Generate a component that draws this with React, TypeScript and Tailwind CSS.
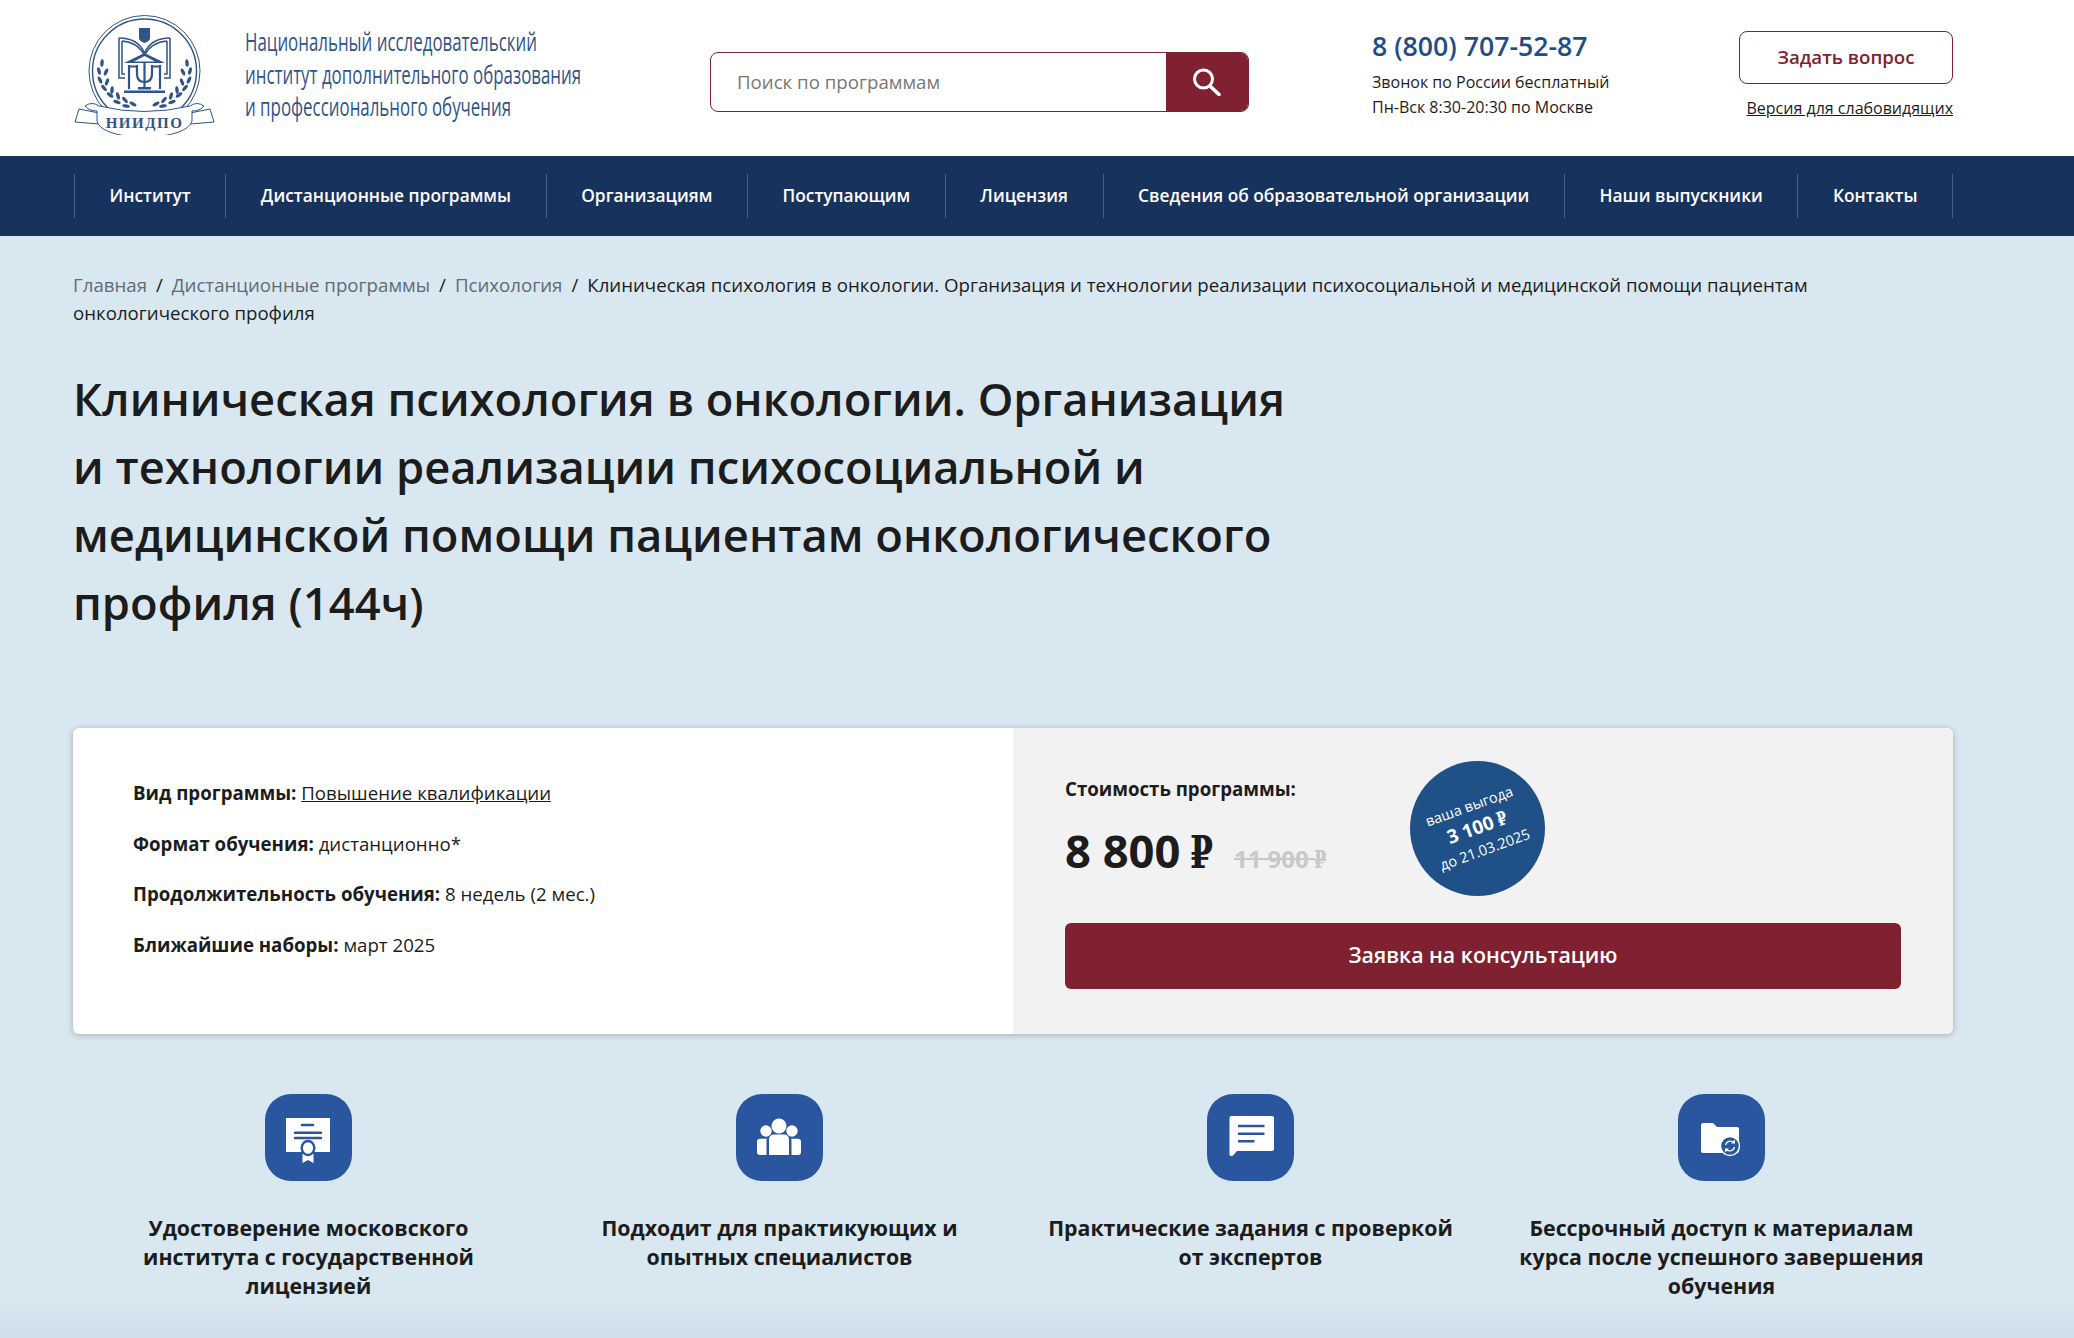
const navItems = [
  "Институт",
  "Дистанционные программы",
  "Организациям",
  "Поступающим",
  "Лицензия",
  "Сведения об образовательной организации",
  "Наши выпускники",
  "Контакты",
];

function Rub({ struck }: { struck?: boolean }) {
  return (
    <span className={`-ml-[0.04em] -mr-[0.2em] inline-block origin-left scale-x-[0.73] font-['DejaVu_Serif',serif] ${struck ? "line-through" : ""}`}>
      ₽
    </span>
  );
}

function Laurel({ flip }: { flip?: boolean }) {
  const leaves = [
    [29, 48, 5],
    [26, 56, -15],
    [33, 57, 25],
    [27, 65, -25],
    [34, 67, 20],
    [31, 73, -40],
    [39, 75, 5],
    [37, 80, -55],
    [45, 81, -15],
    [44, 87, -70],
    [52, 85, -40],
    [53, 91, -80],
    [60, 89, -60],
  ];
  return (
    <g transform={flip ? "translate(143 0) scale(-1 1)" : undefined} fill="#2f5488">
      {leaves.map(([x, y, r], i) => (
        <ellipse key={i} cx={x} cy={y} rx="1.700" ry="3.800" transform={`rotate(${r} ${x} ${y})`} />
      ))}
    </g>
  );
}

function Logo() {
  return (
    <svg width="142" height="120" viewBox="0 0 142 120" className="shrink-0" aria-hidden="true">
      <circle cx="71.500" cy="56" r="55.500" fill="none" stroke="#2f5488" strokeWidth="1" />
      <circle cx="71.500" cy="56" r="52" fill="none" stroke="#2f5488" strokeWidth="1.400" />
      <path d="M66 13h11v10q0 3-5.500 5-5.500-2-5.500-5z" fill="#2f5488" />
      <g fill="none" stroke="#2f5488" strokeWidth="1.500">
        <path d="M46 23v40h6M49 26v33h3" />
        <path d="M97 23v40h-6M94 26v33h-3" />
        <path d="M46 23q19 0 25.500 15M97 23q-19 0-25.500 15" />
        <path d="M49 26q15 1 22.500 14M94 26q-15 1-22.500 14" />
      </g>
      <path d="M71.500 38 92 48H51z" fill="#2f5488" />
      <path d="M71.500 41 82 46.500H61z" fill="#fff" />
      <g fill="none" stroke="#2f5488" strokeWidth="2.200">
        <path d="M56 50v24M87 50v24" />
        <path d="M56 51.500h8M87 51.500h-8" />
        <path d="M64 50v9q0 8 7.500 8t7.500-8v-9" />
        <path d="M71.500 48v26" />
      </g>
      <path d="M65 72h13v2.500H65z" fill="#2f5488" />
      <path d="M51 75.500h41v2.500H51z" fill="#2f5488" />
      <Laurel />
      <Laurel flip />
      <g fill="#fff" stroke="#2f5488" strokeWidth="1">
        <path d="M2 107l4-13 20 4v11z" />
        <path d="M141 107l-4-13-20 4v11z" />
        <path d="M12 91q7-5 14 0 45 11 91 0 7-5 14 0-4 5-12 5v10q-4 14-48 17-44-3-47-17V96q-8 0-12-5z" />
      </g>
      <text x="71.500" y="112.500" textAnchor="middle" fontSize="15" fontWeight="700" letterSpacing="1.500" fontFamily="'Liberation Serif', serif" fill="#2f5488">
        НИИДПО
      </text>
    </svg>
  );
}

function SearchIcon() {
  return (
    <svg width="30" height="28" viewBox="0 0 30 28" fill="none" aria-hidden="true">
      <circle cx="11.500" cy="11" r="9" stroke="#fff" strokeWidth="3" />
      <path d="M18 18l9 8.500" stroke="#fff" strokeWidth="3.600" strokeLinecap="round" />
    </svg>
  );
}

function IconBox({ children }: { children: React.ReactNode }) {
  return (
    <div className="flex h-[87px] w-[87px] items-center justify-center rounded-[26px] bg-[#2a56a0]">
      <svg width="87" height="87" viewBox="0 0 87 87" aria-hidden="true">
        {children}
      </svg>
    </div>
  );
}

const features = [
  {
    lines: ["Удостоверение московского", "института с государственной", "лицензией"],
    icon: (
      <>
        <path d="M21 24h44v34H21z" fill="#fff" />
        <path d="M37 31h11M30 38.700h26M30 44h26" stroke="#2a56a0" strokeWidth="2.600" strokeLinecap="round" />
        <path d="M37.500 60h11v9l-5.500-3-5.500 3z" fill="#fff" />
        <ellipse cx="43" cy="54" rx="6.300" ry="7" fill="#fff" stroke="#2a56a0" strokeWidth="2.400" />
      </>
    ),
  },
  {
    lines: ["Подходит для практикующих и", "опытных специалистов"],
    icon: (
      <g fill="#fff">
        <ellipse cx="43" cy="32" rx="7.500" ry="7.500" />
        <circle cx="30" cy="37" r="5.700" />
        <circle cx="56" cy="37" r="5.700" />
        <path d="M33 46q0-5.500 5-5.500h10q5 0 5 5.500v15H33z" />
        <path d="M31 44.700q-.5 1-.5 2.300v14H24q-3 0-3-3V48q0-3.300 3-3.300z" />
        <path d="M55 44.700q.5 1 .5 2.300v14H62q3 0 3-3V48q0-3.300-3-3.300z" />
      </g>
    ),
  },
  {
    lines: ["Практические задания с проверкой", "от экспертов"],
    icon: (
      <>
        <path d="M24.500 22H65q2 0 2 2v31q0 2-2 2H30l-4 4.500q-2.500 1.500-3.500-.5V24q0-2 2-2z" fill="#fff" />
        <path d="M31 32h26.500M31 39.700h26.500M31 47.300h16.500" stroke="#2a56a0" strokeWidth="2.400" />
      </>
    ),
  },
  {
    lines: ["Бессрочный доступ к материалам", "курса после успешного завершения", "обучения"],
    icon: (
      <>
        <path d="M25 29h10l4 4h20q2 0 2 2v22q0 2-2 2H25q-2 0-2-2V31q0-2 2-2z" fill="#fff" />
        <circle cx="52" cy="52" r="9.500" fill="#2a56a0" stroke="#fff" strokeWidth="1.400" />
        <path d="M47.500 51a4.800 4.800 0 0 1 8-2.500M56.500 53a4.800 4.800 0 0 1-8 2.500" fill="none" stroke="#fff" strokeWidth="1.300" />
        <path d="M57 45.500v4h-4zM47 58.500v-4h4z" fill="#fff" />
      </>
    ),
  },
];

export default function App() {
  return (
    <div className="relative h-[1338px] overflow-hidden bg-[#d9e7f1] font-['Open_Sans',sans-serif] text-[#1c1c1c]">
      {/* шапка */}
      <header className="flex h-[156px] bg-white pl-[73px] pr-[121px]">
        <div className="flex w-[637px] items-center gap-[30px] pb-[6px]">
          <Logo />
          <div className="-mt-[2px] origin-left scale-x-[0.675] whitespace-nowrap text-[25px] leading-[32.500px] text-[#2f5488]">
            Национальный исследовательский
            <br />
            институт дополнительного образования
            <br />
            и профессионального обучения
          </div>
        </div>
        <div className="mt-[52px] flex h-[60px] w-[539px] overflow-hidden rounded-lg border border-[#7f2130]">
          <div className="flex flex-1 items-center pl-[26px] text-[18.670px] text-[#777]">Поиск по программам</div>
          <div className="flex w-[82px] items-center justify-center bg-[#7f2130]">
            <SearchIcon />
          </div>
        </div>
        <div className="ml-[123px] flex w-[367px] flex-col pt-[28px]">
          <div className="text-[26.670px] font-semibold leading-[36px] text-[#1f4e87]">8 (800) 707-52-87</div>
          <div className="mt-[6px] text-[16px] leading-[25px]">
            Звонок по России бесплатный
            <br />
            Пн-Вск 8:30-20:30 по Москве
          </div>
        </div>
        <div className="flex w-[214px] flex-col items-end pt-[31px]">
          <div className="flex h-[53px] w-[214px] items-center justify-center rounded-lg border border-[#7f2130] pb-[2px] text-[18.670px] font-semibold text-[#7f2130]">
            Задать вопрос
          </div>
          <a className="mt-[12px] text-[16px] leading-[24px] underline">Версия для слабовидящих</a>
        </div>
      </header>

      {/* меню */}
      <nav className="flex h-[80px] bg-[#17325c] pl-[74px] pr-[121px]">
        <div className="flex h-[44px] flex-1 items-center justify-between self-center whitespace-nowrap border-r border-[#4a6288]">
          {navItems.map((item) => (
            <div key={item} className="flex h-[44px] items-center border-l border-[#4a6288] px-[34.500px] text-[17.330px] font-semibold text-white">
              {item}
            </div>
          ))}
        </div>
      </nav>

      <main className="pl-[73px] pr-[121px]">
        <div className="max-w-[1760px] pt-[35px] text-[18.670px] leading-[28px]">
          <span className="text-[#5f6b75]">Главная</span>
          <span className="mx-[9px]">/</span>
          <span className="text-[#5f6b75]">Дистанционные программы</span>
          <span className="mx-[9px]">/</span>
          <span className="text-[#5f6b75]">Психология</span>
          <span className="mx-[9px]">/</span>
          Клиническая психология в онкологии. Организация и технологии реализации психосоциальной и медицинской помощи пациентам онкологического профиля
        </div>

        <h1 className="mt-[38px] max-w-[1250px] text-[45.330px] font-semibold leading-[68px]">
          Клиническая психология в онкологии. Организация и технологии реализации психосоциальной и медицинской помощи пациентам онкологического профиля (144ч)
        </h1>

        {/* карточка программы */}
        <section className="mt-[91px] flex h-[306px] overflow-hidden rounded-md bg-white shadow-[0_1px_6px_rgba(0,0,0,0.25)]">
          <div className="flex w-[940px] flex-col gap-[22.700px] pl-[60px] pt-[51px] text-[18.670px] leading-[28px]">
            <div>
              <b className="font-bold">Вид программы:</b> <span className="underline">Повышение квалификации</span>
            </div>
            <div>
              <b className="font-bold">Формат обучения:</b> дистанционно*
            </div>
            <div>
              <b className="font-bold">Продолжительность обучения:</b> 8 недель (2 мес.)
            </div>
            <div>
              <b className="font-bold">Ближайшие наборы:</b> март 2025
            </div>
          </div>
          <div className="flex flex-1 flex-col bg-[#f2f2f2] px-[52px]">
            <div className="flex h-[195px]">
              <div className="w-[345px] pt-[48px]">
                <div className="text-[18.670px] font-bold leading-[26px]">Стоимость программы:</div>
                <div className="mt-[19px] flex items-baseline whitespace-nowrap">
                  <span className="text-[45.330px] font-bold leading-[60px]">
                    8 800 <Rub />
                  </span>
                  <span className="ml-[21px] text-[24px] font-bold text-[#c8c8c8] line-through">
                    11 900 <Rub struck />
                  </span>
                </div>
              </div>
              <div className="mt-[33px] flex h-[135px] w-[135px] items-center justify-center rounded-full bg-[#205088] text-white">
                <div className="-rotate-[20deg] text-center">
                  <div className="text-[14.500px] leading-[20px]">ваша выгода</div>
                  <div className="text-[19px] font-bold leading-[24px]">
                    3 100 <Rub />
                  </div>
                  <div className="text-[14.500px] leading-[24px]">до 21.03.2025</div>
                </div>
              </div>
            </div>
            <div className="flex h-[66px] items-center justify-center rounded-md bg-[#7f2130] pb-[3px] text-[21.330px] font-semibold text-white">
              Заявка на консультацию
            </div>
          </div>
        </section>

        {/* преимущества */}
        <section className="mt-[60px] grid w-[1884px] grid-cols-4">
          {features.map((f) => (
            <div key={f.lines[0]} className="flex flex-col items-center text-center">
              <IconBox>{f.icon}</IconBox>
              <div className="mt-[32px] whitespace-nowrap text-[21.330px] font-bold leading-[29px]">
                {f.lines.map((line) => (
                  <div key={line}>{line}</div>
                ))}
              </div>
            </div>
          ))}
        </section>
      </main>

      <div className="absolute inset-x-0 bottom-0 h-[40px] bg-gradient-to-b from-transparent to-[#cfdee9]" />
    </div>
  );
}
